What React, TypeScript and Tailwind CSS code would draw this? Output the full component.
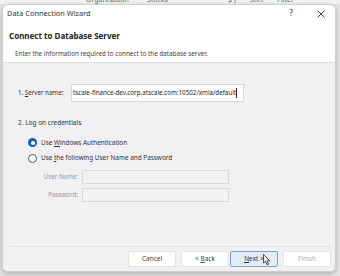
import React from "react";

const font = { fontFamily: '"Noto Sans", "Open Sans", sans-serif' };

function Radio({ checked }: { checked?: boolean }) {
  return checked ? (
    <span className="w-[9px] h-[9px] rounded-full bg-[#1a5fb4] flex items-center justify-center">
      <span className="w-[4px] h-[4px] rounded-full bg-white" />
    </span>
  ) : (
    <span className="w-[9px] h-[9px] rounded-full border border-[#555] bg-white" />
  );
}

function Btn({
  children,
  variant,
}: {
  children: React.ReactNode;
  variant?: "primary" | "disabled";
}) {
  const cls =
    variant === "primary"
      ? "border-[#7f9ed4] bg-[#e4ecf8] text-[#333]"
      : variant === "disabled"
      ? "border-[#e6e6e6] bg-white text-[#b0b0b0]"
      : "border-[#e4e4e4] bg-white text-[#444]";
  return (
    <div
      className={`w-[48px] h-[16px] border rounded-[2px] text-[6.5px] flex items-center justify-center ${cls}`}
    >
      {children}
    </div>
  );
}

export default function App() {
  return (
    <div
      className="w-[340px] h-[276px] bg-[#e6e6e6] overflow-hidden relative"
      style={font}
    >
      {/* spreadsheet header behind the dialog */}
      <div className="h-[4px] overflow-hidden bg-[#f4f4f4]">
        <div className="flex text-[7px] text-[#666] -mt-[5px] leading-[10px]">
          <span className="ml-[86px]">Organisation</span>
          <span className="ml-[18px]">Stocks</span>
          <span className="ml-[60px]">$ )</span>
          <span className="ml-[14px]">Sort</span>
          <span className="ml-[14px]">Filter</span>
        </div>
      </div>

      {/* dialog */}
      <div className="ml-[2px] w-[334px] h-[268px] rounded-[6px] bg-white border border-[#cfcfcf] shadow-[0_2px_6px_rgba(0,0,0,0.25)] flex flex-col overflow-hidden">
        {/* title bar */}
        <div className="h-[17px] flex items-center pl-[4px] pr-[10px] text-[#333]">
          <span className="text-[7.4px]">Data Connection Wizard</span>
          <span className="ml-auto text-[8.5px] mr-[24px]">?</span>
          <svg width="8" height="8" viewBox="0 0 8 8" className="mt-[1px]">
            <path d="M0.5 0.5 L7.5 7.5 M7.5 0.5 L0.5 7.5" stroke="#444" strokeWidth="1" />
          </svg>
        </div>

        {/* header */}
        <div className="h-[40px] bg-white pl-[6px]">
          <div className="text-[8px] font-bold text-[#222] leading-[14px] mt-[7px]">
            Connect to Database Server
          </div>
          <div className="text-[6.3px] text-[#444] mt-[6px] ml-[6px] leading-[10px]">
            Enter the information required to connect to the database server.
          </div>
        </div>

        {/* body */}
        <div className="flex-1 bg-[#f1f0f3] border-t border-[#e2e2e2] flex flex-col">
          <div className="flex-1 pl-[15px] pt-[21px]">
            <div className="flex items-center">
              <span className="text-[6.2px] text-[#333] w-[53px]">
                1. <span className="underline">S</span>erver name:
              </span>
              <div className="w-[173px] h-[18px] bg-white border border-[#d8d8d8] flex items-center pl-[1px] text-[6.25px] text-[#222] whitespace-nowrap overflow-hidden">
                <span>tscale-finance-dev.corp.atscale.com:10502/xmla/default</span>
                <span className="w-[1px] h-[10px] bg-[#222] shrink-0" />
              </div>
            </div>

            <div className="text-[6.5px] text-[#333] mt-[16px]">2. Log on credentials</div>

            <div className="ml-[10px] mt-[10px] flex flex-col gap-[6px] text-[6.4px] text-[#333]">
              <div className="flex items-center gap-[4px]">
                <Radio checked />
                <span>
                  Use <span className="underline">W</span>indows Authentication
                </span>
              </div>
              <div className="flex items-center gap-[4px]">
                <Radio />
                <span>
                  Use <span className="underline">t</span>he following User Name and Password
                </span>
              </div>
            </div>

            <div className="mt-[7px] flex flex-col gap-[4px] text-[6.2px] text-[#9a9a9a]">
              <div className="flex items-center">
                <span className="w-[64px] text-right pr-[4px]">User Name:</span>
                <div className="w-[147px] h-[14px] bg-[#f2f2f2] border border-[#d9d9d9]" />
              </div>
              <div className="flex items-center">
                <span className="w-[64px] text-right pr-[4px]">Password:</span>
                <div className="w-[147px] h-[14px] bg-[#f2f2f2] border border-[#d9d9d9]" />
              </div>
            </div>
          </div>

          {/* footer */}
          <div className="ml-[6px] mr-[4px] border-t border-[#e0e0e0] h-[25px] flex items-center justify-end gap-[5px] relative">
            <Btn>Cancel</Btn>
            <Btn>
              &lt; <span className="underline ml-[2px]">B</span>ack
            </Btn>
            <div className="-mx-[4px]">
              <Btn variant="primary">
                <span className="underline">N</span>ext &gt;
              </Btn>
            </div>
            <div className="ml-[4px]">
              <Btn variant="disabled">Finish</Btn>
            </div>
            <svg
              width="8"
              height="12"
              viewBox="0 0 8 12"
              className="absolute left-[254px] top-[7px]"
            >
              <path
                d="M0.5 0.5 L0.5 9 L2.5 7.2 L4 10.8 L5.4 10.2 L3.9 6.8 L6.6 6.8 Z"
                fill="white"
                stroke="#222"
                strokeWidth="0.8"
              />
            </svg>
          </div>
        </div>
      </div>
    </div>
  );
}
